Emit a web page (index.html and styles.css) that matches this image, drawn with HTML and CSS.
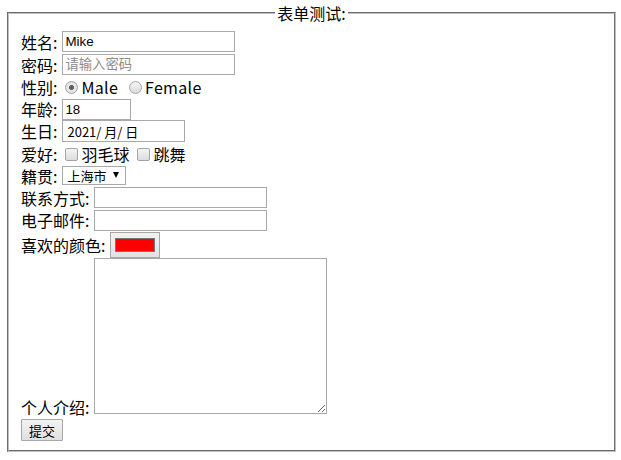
FILE: index.html
```html
<!DOCTYPE html>
<html lang="zh-CN">
<head>
    <meta charset="UTF-8">
    <title>表单测试</title>
    <link rel="stylesheet" href="styles.css">
</head>
<body>
    <form>
        <fieldset class="form-box">
            <legend>表单测试:</legend>

            <!-- 基本信息 -->
            <div class="row row-23">
                <span class="label">姓名:</span>
                <input class="text-field" type="text" value="Mike">
            </div>
            <div class="row row-23">
                <span class="label">密码:</span>
                <input class="text-field" type="password" placeholder="请输入密码">
            </div>
            <div class="row row-22">
                <span class="label">性别:</span>
                <label class="opt opt-wide"><input type="radio" name="sex" checked>Male</label>
                <label class="opt opt-wide"><input type="radio" name="sex">Female</label>
            </div>
            <div class="row row-22">
                <span class="label">年龄:</span>
                <input class="text-field age-field" type="text" value="18">
            </div>
            <div class="row row-22">
                <span class="label">生日:</span>
                <input class="text-field date-field" type="text" value="2021/ 月/ 日">
            </div>
            <div class="row row-23">
                <span class="label">爱好:</span>
                <label class="opt"><input type="checkbox">羽毛球</label>
                <label class="opt"><input type="checkbox">跳舞</label>
            </div>
            <div class="row row-21">
                <span class="label">籍贯:</span>
                <span class="select-wrap">
                    <select class="city">
                        <option>上海市</option>
                        <option>北京市</option>
                    </select>
                </span>
            </div>

            <!-- 联系方式 -->
            <div class="row row-23">
                <span class="label">联系方式:</span>
                <input class="text-field" type="text">
            </div>
            <div class="row row-22">
                <span class="label">电子邮件:</span>
                <input class="text-field" type="text">
            </div>
            <div class="row row-27">
                <span class="label">喜欢的颜色:</span>
                <button type="button" class="color-btn"><span class="swatch"></span></button>
            </div>
            <div class="row row-area">
                <span class="label label-bottom">个人介绍:</span>
                <textarea class="intro"></textarea>
            </div>
            <div class="submit-row">
                <button type="submit" class="submit-btn">提交</button>
            </div>
        </fieldset>
    </form>
</body>
</html>
```

FILE: styles.css
```css
body {
    margin: 0;
    font-family: "Noto Sans CJK SC", "Microsoft YaHei", sans-serif;
    font-size: 16px;
    color: #000;
}

.form-box {
    margin: 4px 5px 0 7px;
    padding: 8px 12px 9px;
    border: 2px groove #c0c0c0;
    min-width: 0;
}

.form-box legend {
    margin: 0 auto;
    padding: 0 2px;
    line-height: 18px;
}

/* 한 줄씩 쌓이는 행 */
.row {
    display: flex;
    align-items: center;
}

.row-21 { height: 21px; }
.row-22 { height: 22px; }
.row-23 { height: 23px; }
.row-27 { height: 27px; }

.row-area {
    height: 156px;
    align-items: flex-end;
}

.label {
    line-height: 18px;
    margin-right: 5px;
    white-space: nowrap;
}

.label-bottom {
    margin-bottom: -2px;
}

.text-field {
    box-sizing: border-box;
    margin: 0;
    width: 173px;
    height: 21px;
    padding: 1px 2px;
    border: 1px solid #a9a9a9;
    font-family: "Liberation Sans", Arial, "Noto Sans CJK SC", sans-serif;
    font-size: 13.33px;
    color: #000;
    outline: none;
}

.text-field::placeholder {
    color: #8c8c8c;
    font-family: "Noto Sans CJK SC", sans-serif;
}

.age-field { width: 69px; }

.date-field {
    width: 123px;
    height: 22px;
    padding-left: 4px;
    font-family: "Noto Sans CJK SC", sans-serif;
    font-size: 13px;
}

/* 라디오 / 체크박스 */
.opt {
    display: flex;
    align-items: center;
    line-height: 18px;
    margin-right: 5px;
}

.opt-wide {
    margin-right: 8px;
    letter-spacing: 0.3px;
}

.opt input {
    -webkit-appearance: none;
    appearance: none;
    box-sizing: border-box;
    width: 13px;
    height: 13px;
    margin: 1px 3px 0 3px;
    border: 1px solid #a4a4a4;
    background: linear-gradient(#f4f4f4, #dcdcdc);
}

.opt input[type="radio"] {
    border-radius: 50%;
}

.opt input[type="radio"]:checked {
    background: radial-gradient(circle, #555 0, #666 2.2px, #e8e8e8 2.8px, #dcdcdc 100%);
}

.opt input[type="checkbox"] {
    border-radius: 2px;
}

/* 셀렉트 */
.select-wrap {
    position: relative;
    display: inline-block;
    height: 19px;
}

.city {
    -webkit-appearance: none;
    appearance: none;
    box-sizing: border-box;
    display: block;
    margin: 0;
    width: 64px;
    height: 19px;
    padding: 0 0 0 4px;
    border: 1px solid #a9a9a9;
    border-radius: 0;
    background: #fff;
    font-family: "Noto Sans CJK SC", sans-serif;
    font-size: 13px;
    line-height: 17px;
    color: #000;
}

.select-wrap::after {
    content: "";
    position: absolute;
    right: 7px;
    top: 6px;
    border-left: 3.5px solid transparent;
    border-right: 3.5px solid transparent;
    border-top: 6px solid #000;
    pointer-events: none;
}

/* 색상 버튼 */
.color-btn {
    box-sizing: border-box;
    margin: 0;
    width: 50px;
    height: 26px;
    padding: 0;
    border: 1px solid #a6a6a6;
    background: linear-gradient(#f2f2f2, #e2e2e2);
    display: flex;
    align-items: center;
    justify-content: center;
}

.swatch {
    display: block;
    box-sizing: border-box;
    width: 40px;
    height: 14px;
    border: 1px solid #777;
    background: #ff0000;
}

.intro {
    box-sizing: border-box;
    margin: 0;
    width: 233px;
    height: 156px;
    padding: 2px;
    border: 1px solid #a9a9a9;
    outline: none;
}

.submit-row {
    margin-top: 5px;
    display: flex;
}

.submit-btn {
    box-sizing: border-box;
    margin: 0;
    width: 42px;
    height: 22px;
    padding: 0;
    border: 1px solid #a6a6a6;
    border-radius: 1px;
    background: linear-gradient(#f3f3f3, #e0e0e0);
    font-family: "Noto Sans CJK SC", sans-serif;
    font-size: 13px;
    color: #000;
}
```
